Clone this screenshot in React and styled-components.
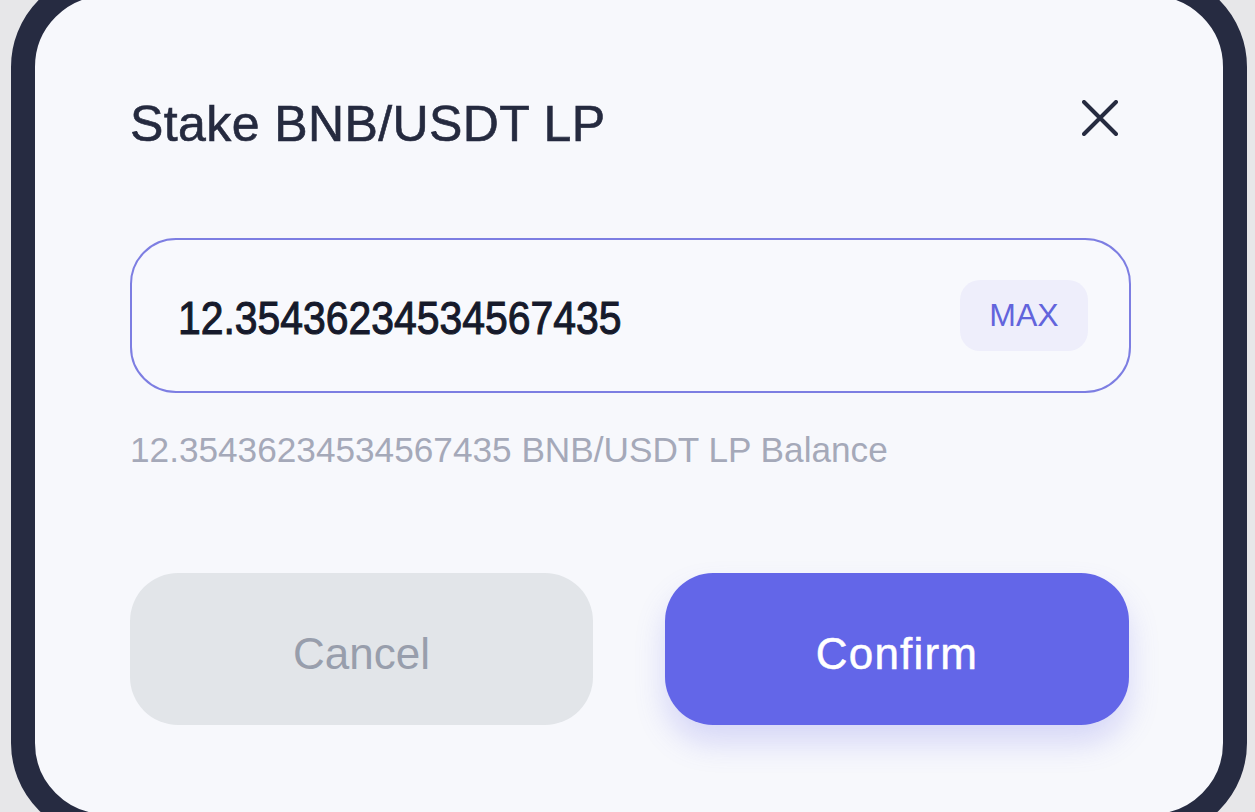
import React from "react";
import styled, { createGlobalStyle } from "styled-components";

const Global = createGlobalStyle`
  html, body {
    margin: 0;
    padding: 0;
    background: #e7e7e9;
    overflow: hidden;
    font-family: "Liberation Sans", Arial, sans-serif;
  }
  #root { width: 1255px; height: 812px; overflow: hidden; }
`;

const Frame = styled.div`
  box-sizing: border-box;
  margin: -28px 0 0 11px;
  width: 1236px;
  height: 866px;
  border: 24px solid #262b41;
  border-radius: 95px;
  background: #f7f8fc;
  padding: 88px 92px 0 95px;
  display: flex;
  flex-direction: column;
`;

const Header = styled.div`
  height: 80px;
  display: flex;
  align-items: center;
  justify-content: space-between;
`;

const Title = styled.h1`
  margin: 0;
  font-family: "Liberation Sans", Arial, sans-serif;
  font-size: 50px;
  font-weight: 400;
  line-height: 80px;
  color: #252a3f;
  letter-spacing: 0.4px;
  -webkit-text-stroke: 0.6px #252a3f;
`;

const CloseButton = styled.button`
  width: 48px;
  height: 48px;
  margin: 0 7px 12px 0;
  padding: 0;
  border: none;
  background: transparent;
  display: flex;
  align-items: center;
  justify-content: center;
  color: #262b40;
`;

const InputBox = styled.div`
  box-sizing: border-box;
  margin-top: 74px;
  height: 155px;
  border: 2px solid #7d7ee2;
  border-radius: 46px;
  background: #f8f9fd;
  display: flex;
  align-items: center;
  justify-content: space-between;
  padding: 0 41px 0 46px;
`;

const Amount = styled.span`
  display: inline-block;
  font-family: "Liberation Sans", Arial, sans-serif;
  font-weight: 400;
  font-size: 47px;
  letter-spacing: 0;
  color: #161a2b;
  line-height: 1;
  margin-top: 4px;
  transform: scaleX(0.87);
  transform-origin: left center;
  -webkit-text-stroke: 1.1px #161a2b;
`;

const MaxButton = styled.button`
  width: 128px;
  height: 71px;
  border: none;
  border-radius: 20px;
  background: #eeeefb;
  color: #6264dc;
  font-family: "Liberation Sans", Arial, sans-serif;
  font-size: 32px;
  font-weight: 400;
  padding: 0;
  display: flex;
  align-items: center;
  justify-content: center;
`;

const Balance = styled.div`
  margin-top: 37px;
  font-size: 35.2px;
  line-height: 40px;
  color: #a5a9b9;
`;

const Actions = styled.div`
  margin-top: 103px;
  display: grid;
  grid-template-columns: 463px 464px;
  column-gap: 72px;
`;

const ActionButton = styled.button`
  height: 152px;
  border: none;
  border-radius: 48px;
  font-family: "Liberation Sans", Arial, sans-serif;
  font-size: 44px;
  font-weight: 400;
  background: ${(p) => (p.$primary ? "#6366e8" : "#e2e5e9")};
  color: ${(p) => (p.$primary ? "#ffffff" : "#989eac")};
  box-shadow: ${(p) => (p.$primary ? "0 18px 30px rgba(99, 102, 232, 0.22)" : "none")};
  letter-spacing: ${(p) => (p.$primary ? "1.2px" : "0")};
  padding: 9px 0 0;
  -webkit-text-stroke: ${(p) => (p.$primary ? "0.5px #ffffff" : "0")};
`;

export default function App() {
  return (
    <>
      <Global />
      <Frame>
        <Header>
          <Title>Stake BNB/USDT LP</Title>
          <CloseButton aria-label="Close">
            <svg width="36" height="36" viewBox="0 0 36 36" fill="none">
              <path
                d="M2 2 L34 34 M34 2 L2 34"
                stroke="currentColor"
                strokeWidth="4"
                strokeLinecap="round"
              />
            </svg>
          </CloseButton>
        </Header>
        <InputBox>
          <Amount>12.35436234534567435</Amount>
          <MaxButton>MAX</MaxButton>
        </InputBox>
        <Balance>12.35436234534567435 BNB/USDT LP Balance</Balance>
        <Actions>
          <ActionButton>Cancel</ActionButton>
          <ActionButton $primary>Confirm</ActionButton>
        </Actions>
      </Frame>
    </>
  );
}
